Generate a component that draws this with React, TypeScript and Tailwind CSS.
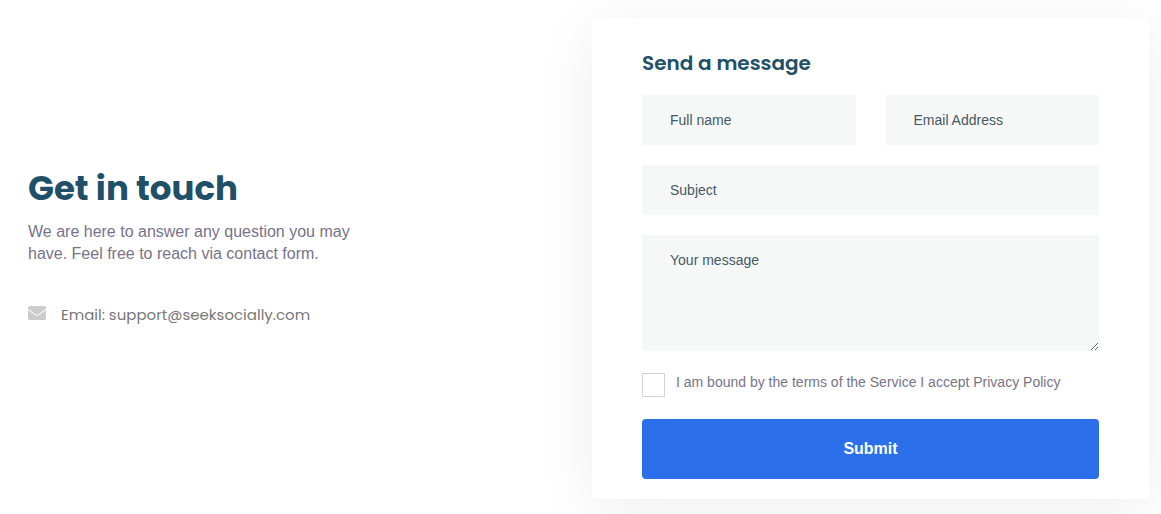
import React from 'react';

const fieldClass =
  'block w-full bg-[#f6f8f8] px-7 text-sm text-[#455a64] placeholder:text-[#455a64] placeholder:opacity-100 outline-none focus:ring-1 focus:ring-[#2c6fea]';

const MailIcon: React.FC = () => (
  <svg viewBox="0 0 18 14" className="mb-1 w-[18px] h-[14px] shrink-0" aria-hidden="true">
    <rect width="18" height="14" rx="1.6" fill="#cccccc" />
    <path d="M0 3.4 L7 8.6 Q9 10 11 8.6 L18 3.4" fill="none" stroke="#ffffff" strokeWidth="1.1" />
  </svg>
);

// Intro text and contact address
const ContactInfo: React.FC = () => {
  return (
    <section className="pb-7">
      <h1 className="font-['Poppins','Inter',sans-serif] text-[34px] leading-[42px] font-bold text-[#205067]">
        Get in touch
      </h1>
      <p className="mt-3 max-w-[340px] text-base leading-[22px] text-[#77738a]">
        We are here to answer any question you may have. Feel free to reach via contact form.
      </p>
      <div className="mt-[39px] flex items-center gap-[15px]">
        <MailIcon />
        <a
          href="mailto:support@seeksocially.com"
          className="font-['Poppins','Inter',sans-serif] text-[15px] leading-[22px] font-normal text-[#777777]"
        >
          Email: support@seeksocially.com
        </a>
      </div>
    </section>
  );
};

// Message form card
const ContactForm: React.FC = () => {
  return (
    <form
      className="rounded bg-white px-[50px] pt-[30px] pb-5 shadow-[0_10px_60px_rgba(0,0,0,0.07)]"
      onSubmit={(e) => e.preventDefault()}
    >
      <h2 className="font-['Poppins','Inter',sans-serif] text-xl leading-[30px] font-semibold text-[#205067]">
        Send a message
      </h2>
      <div className="mt-[17px] grid grid-cols-2 gap-x-[30px] gap-y-5">
        <input type="text" aria-label="Full name" placeholder="Full name" className={`${fieldClass} h-[50px]`} />
        <input type="email" aria-label="Email Address" placeholder="Email Address" className={`${fieldClass} h-[50px]`} />
        <input type="text" aria-label="Subject" placeholder="Subject" className={`${fieldClass} col-span-2 h-[50px]`} />
        <textarea
          aria-label="Your message"
          placeholder="Your message"
          className={`${fieldClass} col-span-2 h-[116px] resize-y pt-[15px]`}
        />
      </div>
      <div className="mt-[22px] flex items-start gap-[11px]">
        <input
          id="terms"
          type="checkbox"
          className="h-6 w-[23px] shrink-0 appearance-none border border-[#d3d1dc] bg-white checked:bg-[#2c6fea]"
        />
        <label htmlFor="terms" className="text-sm leading-[18px] text-[#77738a]">
          I am bound by the terms of the Service I accept Privacy Policy
        </label>
      </div>
      <button type="submit" className="mt-[22px] h-[60px] w-full rounded bg-[#2c6fea] text-base font-bold text-white">
        Submit
      </button>
    </form>
  );
};

export default function App() {
  return (
    <main className="grid min-h-screen grid-cols-1 items-start gap-[7px] overflow-hidden bg-white pt-[18px] pr-3 pb-3 pl-7 font-['Liberation_Sans',Arial,sans-serif] md:grid-cols-2">
      <div className="self-center">
        <ContactInfo />
      </div>
      <ContactForm />
    </main>
  );
}
